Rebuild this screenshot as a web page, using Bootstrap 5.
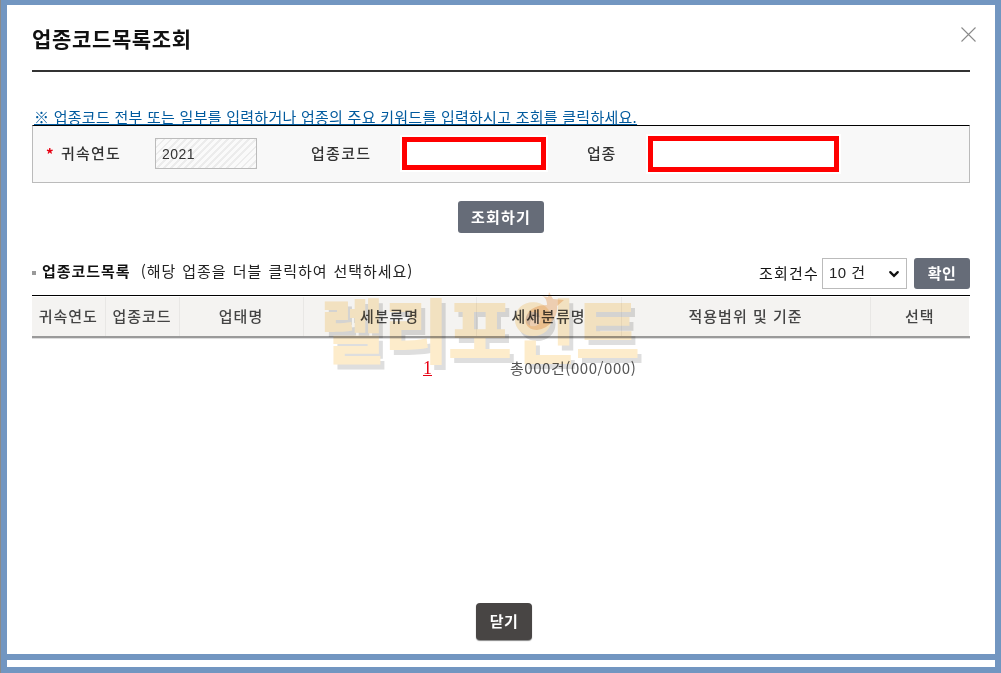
<!DOCTYPE html>
<html lang="ko">
<head>
<meta charset="utf-8">
<title>업종코드목록조회</title>
<link href="https://cdn.jsdelivr.net/npm/bootstrap@5.3.0/dist/css/bootstrap.min.css" rel="stylesheet">
<style>
html,body{height:100%;margin:0;overflow:hidden}
body{background:#7296c1;font-family:"Noto Sans CJK KR","Liberation Sans",sans-serif;color:#222;font-size:15px;padding:5px 6px 6px 6px;border-left:1px solid #8a8a8a}
.shell{height:662px;display:flex;flex-direction:column;gap:6px}
.pane{background:#fff;height:649px;padding:0 25px 0 25px;position:relative;display:flex;flex-direction:column}
.strip{background:#fff;height:7px}
.head{height:67px;border-bottom:2px solid #333;display:flex;align-items:center;padding-top:3px}
.head h1{font-size:21px;font-weight:700;margin:0;color:#111;letter-spacing:.65px}
.closer{position:absolute;right:19px;top:22px;width:15px;height:15px;padding:0;border:0;background:none;line-height:0}
.notice{margin-top:33px;height:20px;line-height:23px;font-size:15px;color:#005a9e;text-decoration:underline;padding-left:2px;letter-spacing:.26px;white-space:nowrap}
.filter{height:58px;border:1px solid #bbb;border-top-color:#000;background:#f8f8f8;display:flex;align-items:center;font-size:15px;color:#333;padding-bottom:1px}
.req{color:#e60012;width:15px;padding-left:13px;font-weight:700;box-sizing:content-box;line-height:1}
.lab1{width:94px;font-weight:500;letter-spacing:1.2px}
.lab2{width:91px;margin-left:54px;letter-spacing:1.3px;font-weight:500}
.lab3{width:61px;margin-left:41px;font-weight:500;letter-spacing:.8px}
.yearbox{width:102px;height:31px;border:1px solid #bbb;border-radius:0;padding:0 6px;font-size:14px;color:#333;background:repeating-linear-gradient(135deg,#ececec 0 2px,#fafafa 2px 5px);font-family:"Liberation Sans",sans-serif;letter-spacing:.5px}
.redbox{border:5px solid #f00;background:#fff;box-shadow:0 0 0 2px #fff;border-radius:0;padding:0}
.redbox.one{width:144px;height:33px}
.redbox.two{width:191px;height:36px}
.btn-query{display:block;margin:18px auto 0;width:86px;height:32px;background:#666c78;color:#fff;font-weight:700;font-size:15px;border:0;border-radius:3px;padding:0;letter-spacing:1.2px}
.listbar{display:flex;align-items:center;justify-content:space-between;margin-top:25px;height:31px}
.listtitle{font-size:15px;color:#222;letter-spacing:.95px;word-spacing:1px;position:relative;top:-2px}
.listtitle b{color:#111;font-weight:700;margin-right:4px}
.tick{display:inline-block;width:4px;height:4px;background:#999;margin-right:6px;vertical-align:middle}
.cnt{display:flex;align-items:center;color:#111;font-size:15px;letter-spacing:1.2px}
.cnt select{width:85px;height:31px;margin-left:3px;margin-right:7px;border:1px solid #bbb;border-radius:0;padding:0 0 0 6px;font-size:15px;color:#222;letter-spacing:.5px;background-position:right 4px center;font-family:"Liberation Sans","Noto Sans CJK KR",sans-serif;background-image:url("data:image/svg+xml,%3csvg xmlns='http://www.w3.org/2000/svg' viewBox='0 0 16 16'%3e%3cpath fill='none' stroke='%23111' stroke-linecap='round' stroke-width='3' d='M3 5.5l5 5 5-5'/%3e%3c/svg%3e")}
.btn-ok{width:56px;height:31px;background:#666c78;color:#fff;font-weight:700;font-size:15px;border:0;border-radius:3px;padding:0;letter-spacing:.5px}
.grid-wrap{margin-top:6px;border-top:1px solid #000;padding-top:1px}
table.codes{table-layout:fixed;width:937px;margin:0;border-collapse:collapse}
table.codes th{background:#f4f3f1;color:#444;font-size:15px;font-weight:500;text-align:center;height:39px;padding:0;border:0;border-right:1px solid #e8e7e5;letter-spacing:1px;vertical-align:middle}
table.codes th:last-child{border-right:0}
.grid-under{height:3px;background:#9a9a9a;border-bottom:1px solid #ddd;width:938px;box-sizing:border-box}
.pager{display:flex;margin-top:20px;height:18px;line-height:18px;font-size:15px}
.pg-num{margin-left:391px;width:87px;color:#e60012;text-decoration:underline;font-family:"Liberation Serif",serif;font-size:18px}
.pg-total{color:#555;font-size:15px;letter-spacing:.55px}
.stamp{position:absolute;left:313px;top:288px;font-size:70px;line-height:1;font-weight:900;color:#fdeccb;text-shadow:4px 5px 0 #dedede;letter-spacing:-.5px;white-space:nowrap;mix-blend-mode:multiply;pointer-events:none}
.stamp-mark{position:absolute;left:516px;top:287px;mix-blend-mode:multiply;pointer-events:none}
.foot{margin-top:auto;padding-bottom:14px;text-align:center}
.btn-close2{width:56px;height:37px;background:#484544;color:#fff;font-weight:700;font-size:15px;border:0;border-radius:4px;padding:0;box-shadow:0 1px 1px #888;letter-spacing:.5px;position:relative;left:3px}
</style>
</head>
<body>
<div class="shell">
  <div class="pane">
    <div class="head"><h1>업종코드목록조회</h1></div>
    <button class="closer" type="button" aria-label="닫기">
      <svg width="15" height="15" viewBox="0 0 15 15"><path d="M.5 .5L14.5 14.5M14.5 .5L.5 14.5" stroke="#8a8a8a" stroke-width="1.1" fill="none"/></svg>
    </button>
    <div class="notice">※ 업종코드 전부 또는 일부를 입력하거나 업종의 주요 키워드를 입력하시고 조회를 클릭하세요.</div>
    <div class="filter">
      <span class="req">*</span>
      <span class="lab1">귀속연도</span>
      <input class="yearbox" value="2021" readonly>
      <span class="lab2">업종코드</span>
      <input class="redbox one">
      <span class="lab3">업종</span>
      <input class="redbox two">
    </div>
    <button class="btn btn-query" type="button">조회하기</button>
    <div class="listbar">
      <div class="listtitle"><span class="tick"></span><b>업종코드목록</b> (해당 업종을 더블 클릭하여 선택하세요)</div>
      <div class="cnt">조회건수
        <select class="form-select"><option>10 건</option></select>
        <button class="btn btn-ok" type="button">확인</button>
      </div>
    </div>
    <div class="grid-wrap">
      <table class="table codes">
        <colgroup>
          <col style="width:73px"><col style="width:74px"><col style="width:124px"><col style="width:173px"><col style="width:145px"><col style="width:249px"><col style="width:99px">
        </colgroup>
        <thead><tr><th>귀속연도</th><th>업종코드</th><th>업태명</th><th>세분류명</th><th>세세분류명</th><th>적용범위 및 기준</th><th>선택</th></tr></thead>
      </table>
      <div class="grid-under"></div>
    </div>
    <div class="pager"><span class="pg-num">1</span><span class="pg-total">총000건(000/000)</span></div>
    <div class="stamp">렐리포인트</div>
    <svg class="stamp-mark" width="42" height="40" viewBox="0 0 42 40" aria-hidden="true"><path d="M26 0L30 7L41 8L34 14C35 24 28 36 14 38C6 38 1 33 3 25C6 16 15 13 24 13C24 8 22 5 19 4L25 5Z" fill="#f8d9bc"/></svg>
    <div class="foot"><button class="btn btn-close2" type="button">닫기</button></div>
  </div>
  <div class="strip"></div>
</div>
<script src="https://cdn.jsdelivr.net/npm/bootstrap@5.3.0/dist/js/bootstrap.bundle.min.js"></script>
</body>
</html>
